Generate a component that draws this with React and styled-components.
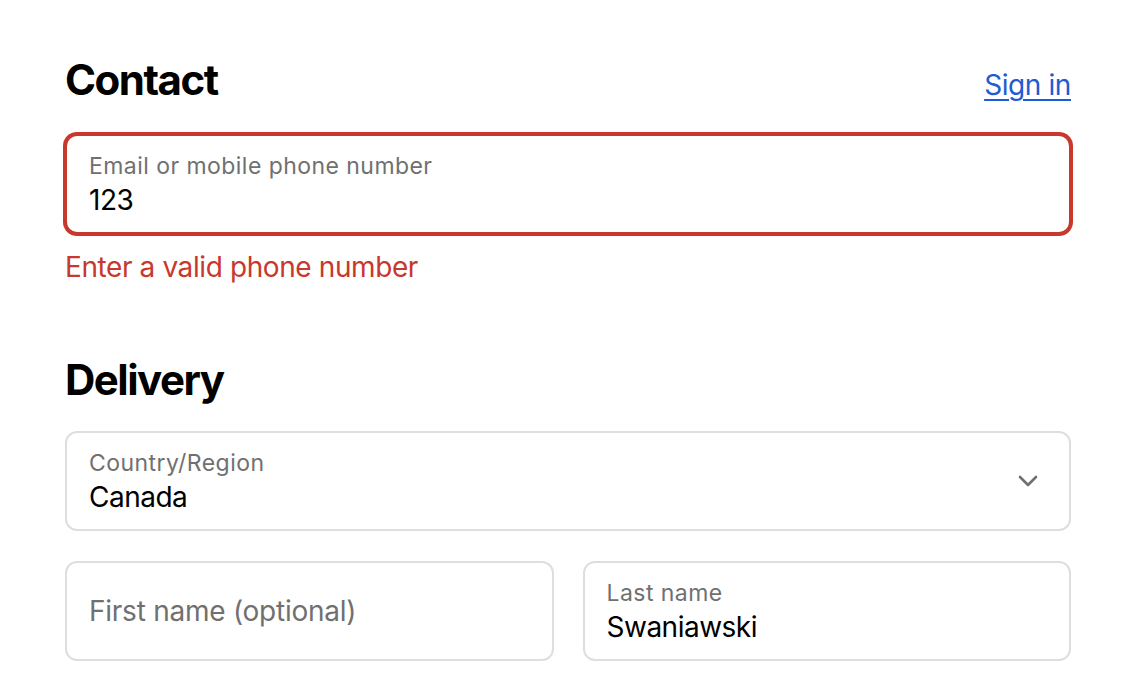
import React from "react";
import styled, { createGlobalStyle, css } from "styled-components";

const GlobalStyle = createGlobalStyle`
  html, body {
    margin: 0;
    padding: 0;
    background: #ffffff;
  }
  body {
    font-family: Inter, "Noto Sans", "Liberation Sans", sans-serif;
    color: #000000;
    -webkit-font-smoothing: antialiased;
  }
  * { box-sizing: border-box; }
`;

const Page = styled.main`
  width: 1136px;
  padding: 55px 65px 0 65px;
  display: flex;
  flex-direction: column;
`;

const Section = styled.section`
  display: flex;
  flex-direction: column;
  margin-top: ${(p) => p.$top || 0}px;
`;

const HeaderRow = styled.div`
  display: flex;
  justify-content: space-between;
  align-items: baseline;
  margin-bottom: ${(p) => p.$gap || 28}px;
`;

const Heading = styled.h2`
  margin: 0;
  font-size: 42px;
  line-height: 50px;
  font-weight: 700;
  letter-spacing: -1.5px;
  color: #000;
`;

const Link = styled.a`
  font-size: 28px;
  line-height: 34px;
  letter-spacing: -0.4px;
  color: #1f5bd2;
  text-decoration: underline;
  text-underline-offset: 4px;
  text-decoration-thickness: 2px;
  cursor: pointer;
`;

const Field = styled.div`
  position: relative;
  height: 100px;
  border: 2px solid #dedede;
  border-radius: 12px;
  padding: ${(p) => (p.$filled ? "17px 22px 0" : "0 22px")};
  display: flex;
  flex-direction: column;
  justify-content: ${(p) => (p.$filled ? "flex-start" : "center")};
  gap: 4px;
  background: #fff;
  ${(p) =>
    p.$error &&
    css`
      border-color: #c8382c;
      box-shadow: 0 0 0 2px #c8382c;
    `}
`;

const Label = styled.span`
  font-size: 23px;
  line-height: 26px;
  letter-spacing: 0.45px;
  color: #707070;
`;

const Value = styled.span`
  font-size: 28px;
  line-height: 34px;
  letter-spacing: -0.5px;
  color: #000;
`;

const Placeholder = styled.span`
  font-size: 28px;
  line-height: 34px;
  letter-spacing: -0.25px;
  color: #707070;
`;

const ErrorText = styled.p`
  margin: 16px 0 0 0;
  font-size: 28px;
  line-height: 34px;
  letter-spacing: -0.4px;
  color: #c8382c;
`;

const Chevron = styled.svg`
  position: absolute;
  right: 31px;
  top: 50%;
  transform: translateY(-50%);
  width: 20px;
  height: 12px;
`;

const Row = styled.div`
  display: grid;
  grid-template-columns: 1fr 1fr;
  gap: 29px;
  margin-top: 30px;
`;

export default function App() {
  return (
    <>
      <GlobalStyle />
      <Page>
        <Section>
          <HeaderRow $gap={29}>
            <Heading>Contact</Heading>
            <Link>Sign in</Link>
          </HeaderRow>
          <Field $filled $error>
            <Label>Email or mobile phone number</Label>
            <Value>123</Value>
          </Field>
          <ErrorText>Enter a valid phone number</ErrorText>
        </Section>

        <Section $top={71}>
          <HeaderRow $gap={26}>
            <Heading>Delivery</Heading>
          </HeaderRow>
          <Field $filled>
            <Label>Country/Region</Label>
            <Value>Canada</Value>
            <Chevron viewBox="0 0 20 12" fill="none">
              <path
                d="M2 2 L10 10 L18 2"
                stroke="#707070"
                strokeWidth="2.6"
                strokeLinecap="round"
                strokeLinejoin="round"
              />
            </Chevron>
          </Field>
          <Row>
            <Field>
              <Placeholder>First name (optional)</Placeholder>
            </Field>
            <Field $filled>
              <Label>Last name</Label>
              <Value>Swaniawski</Value>
            </Field>
          </Row>
        </Section>
      </Page>
    </>
  );
}
